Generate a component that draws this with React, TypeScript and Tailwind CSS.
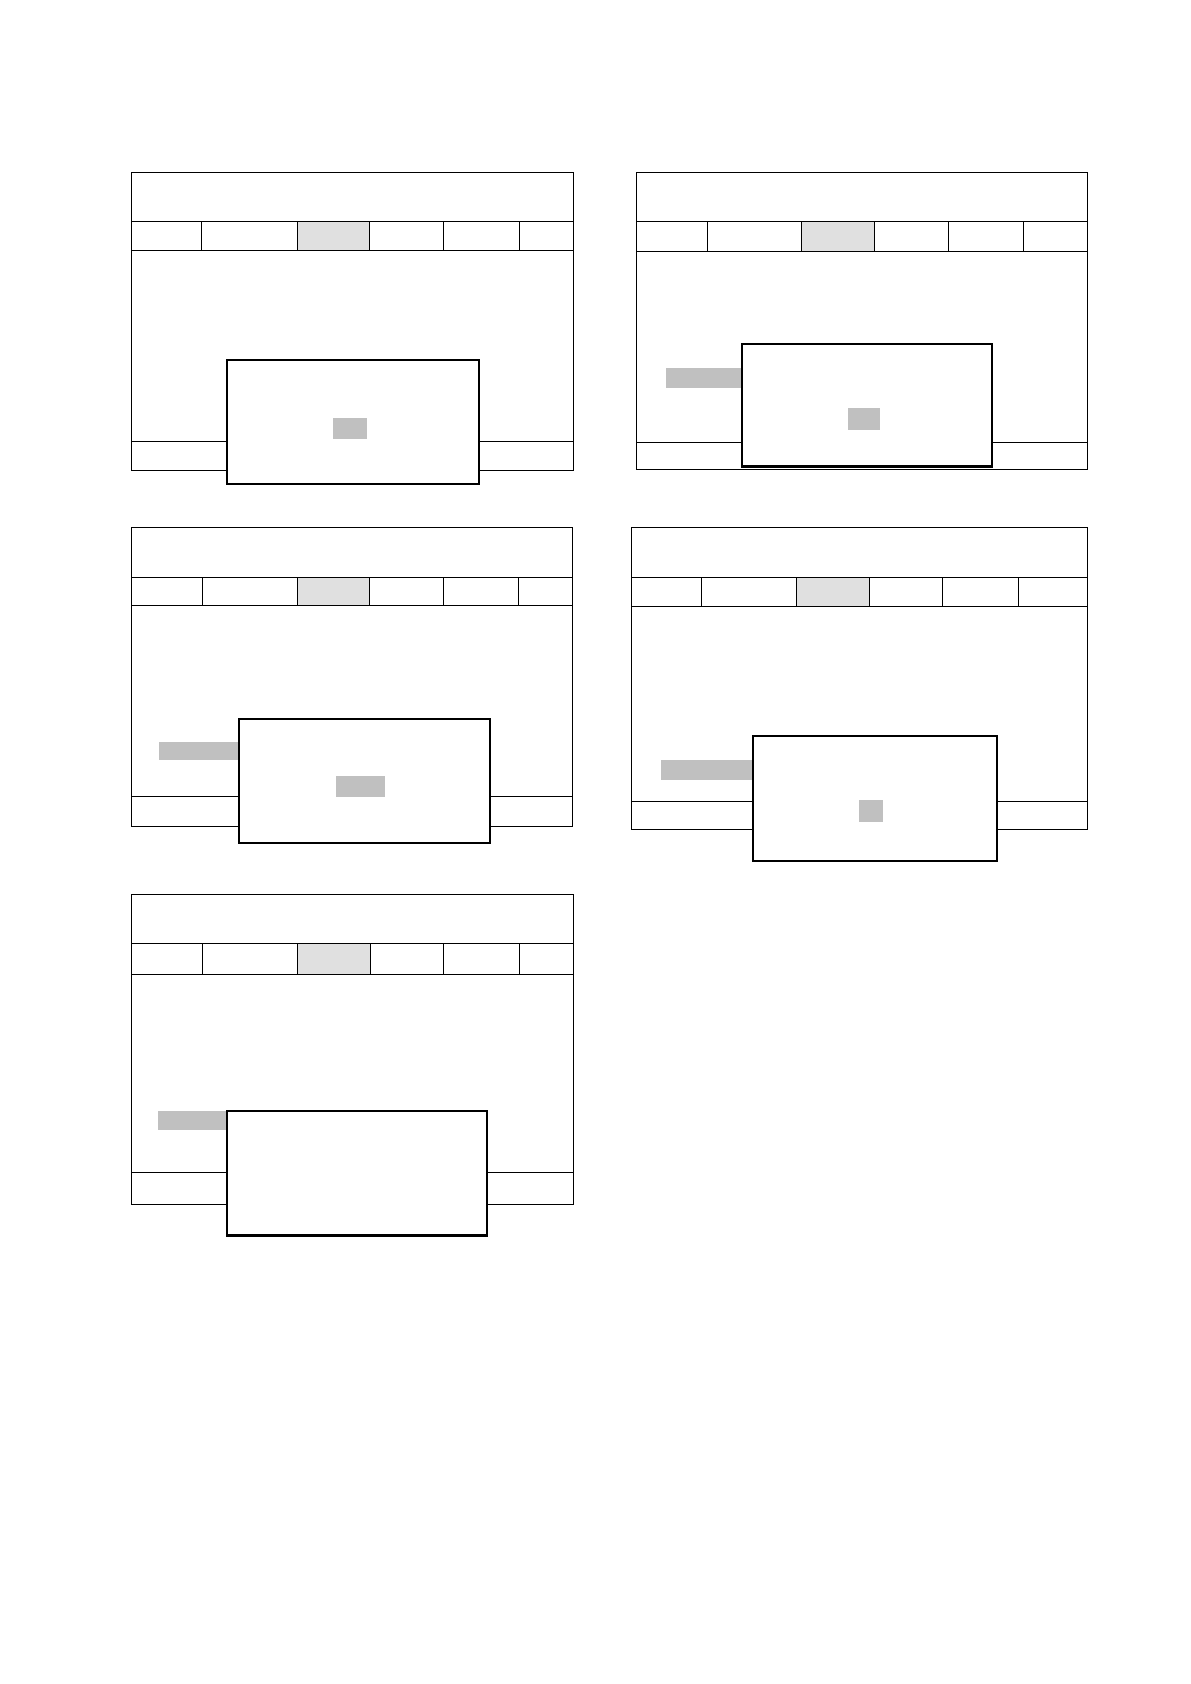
import React from "react";

type PanelSpec = {
  box: string;
  header: string;
  tabs: string;
  bottom: string;
  tabW: string[];
  dialog: string;
  center?: string;
  label?: string;
};

const panels: PanelSpec[] = [
  {
    box: "w-[443px] h-[299px]",
    header: "h-[49px]",
    tabs: "h-[29px]",
    bottom: "h-[29px]",
    tabW: ["w-[70px]", "w-[96px]", "w-[72px]", "w-[74px]", "w-[76px]", "flex-1"],
    dialog: "left-[94px] top-[186px] w-[254px] h-[126px] border-2",
    center: "ml-[105px] mt-[57px] w-[34px] h-[21px]",
  },
  {
    box: "w-[452px] h-[298px]",
    header: "h-[49px]",
    tabs: "h-[30px]",
    bottom: "h-[27px]",
    tabW: ["w-[71px]", "w-[94px]", "w-[73px]", "w-[74px]", "w-[75px]", "flex-1"],
    dialog: "left-[104px] top-[170px] w-[252px] h-[125px] border-2 border-b-[3px]",
    center: "ml-[105px] mt-[63px] w-[32px] h-[22px]",
    label: "left-[29px] top-[195px] w-[76px] h-[20px]",
  },
];

const panels2: PanelSpec[] = [
  {
    box: "w-[442px] h-[300px]",
    header: "h-[50px]",
    tabs: "h-[28px]",
    bottom: "h-[30px]",
    tabW: ["w-[71px]", "w-[95px]", "w-[72px]", "w-[74px]", "w-[75px]", "flex-1"],
    dialog: "left-[106px] top-[190px] w-[253px] h-[126px] border-2",
    center: "ml-[96px] mt-[56px] w-[49px] h-[21px]",
    label: "left-[27px] top-[214px] w-[80px] h-[18px]",
  },
  {
    box: "w-[457px] h-[303px]",
    header: "h-[50px]",
    tabs: "h-[29px]",
    bottom: "h-[28px]",
    tabW: ["w-[70px]", "w-[95px]", "w-[73px]", "w-[73px]", "w-[76px]", "flex-1"],
    dialog: "left-[120px] top-[207px] w-[246px] h-[127px] border-2",
    center: "ml-[105px] mt-[63px] w-[24px] h-[22px]",
    label: "left-[29px] top-[232px] w-[91px] h-[20px]",
  },
];

const panel5: PanelSpec = {
  box: "w-[443px] h-[311px]",
  header: "h-[49px]",
  tabs: "h-[31px]",
  bottom: "h-[32px]",
  tabW: ["w-[71px]", "w-[95px]", "w-[73px]", "w-[73px]", "w-[76px]", "flex-1"],
  dialog: "left-[94px] top-[215px] w-[262px] h-[127px] border-2 border-b-[3px]",
  label: "left-[26px] top-[216px] w-[69px] h-[19px]",
};

function Panel({ p }: { p: PanelSpec }) {
  return (
    <div className={`relative flex flex-col border border-black bg-white ${p.box}`}>
      <div className={`shrink-0 border-b border-black ${p.header}`} />
      <div className={`flex shrink-0 border-b border-black ${p.tabs}`}>
        {p.tabW.map((w, i) => (
          <div
            key={i}
            className={`${w} h-full ${i < 5 ? "border-r border-black" : ""} ${
              i === 2 ? "bg-[#e0e0e0]" : "bg-white"
            }`}
          />
        ))}
      </div>
      <div className="flex-1" />
      <div className={`shrink-0 border-t border-black ${p.bottom}`} />
      {p.label && <div className={`absolute bg-[#c0c0c0] blur-[0.6px] ${p.label}`} />}
      <div className={`absolute border-black bg-white ${p.dialog}`}>
        {p.center && <div className={`bg-[#c0c0c0] blur-[0.6px] ${p.center}`} />}
      </div>
    </div>
  );
}

export default function App() {
  return (
    <div className="w-[1191px] min-h-[1684px] bg-white pt-[172px] pl-[131px] font-['Liberation_Sans',sans-serif]">
      <div className="flex items-start">
        <Panel p={panels[0]} />
        <div className="ml-[62px]">
          <Panel p={panels[1]} />
        </div>
      </div>
      <div className="flex items-start mt-[56px]">
        <Panel p={panels2[0]} />
        <div className="ml-[58px]">
          <Panel p={panels2[1]} />
        </div>
      </div>
      <div className="flex items-start mt-[64px]">
        <Panel p={panel5} />
      </div>
    </div>
  );
}
